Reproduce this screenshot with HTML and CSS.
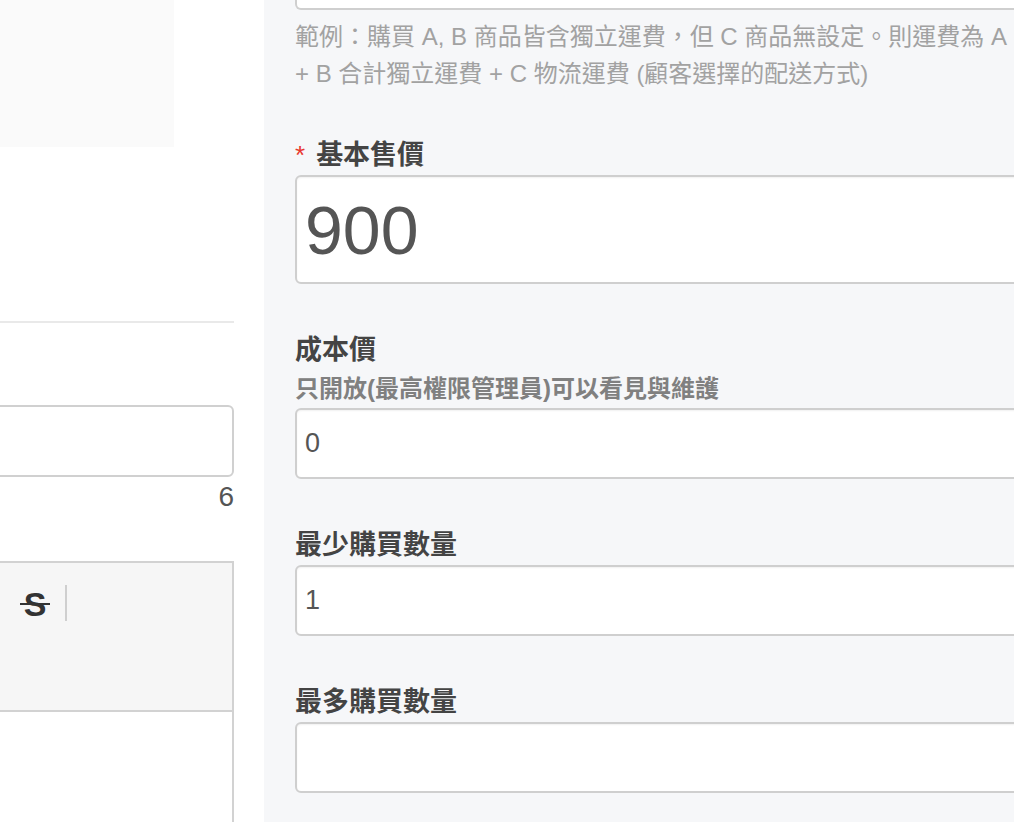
FILE: index.html
```html
<!DOCTYPE html>
<html lang="zh-Hant">
<head>
<meta charset="utf-8">
<title>商品設定</title>
<link rel="stylesheet" href="styles.css">
</head>
<body>
<div class="page">
  <div class="left">
    <div class="left-inner">
      <div class="gray-box"></div>
      <div class="divider"></div>
      <div class="field-box"></div>
      <div class="counter">6</div>
      <div class="editor">
        <div class="toolbar">
          <span class="tool-strike">S</span>
          <span class="tool-sep"></span>
        </div>
        <div class="editor-body"></div>
      </div>
    </div>
  </div>
  <div class="right">
    <div class="stub"></div>
    <p class="help">範例：購買 A, B 商品皆含獨立運費，但 C 商品無設定。則運費為 A + B 合計獨立運費 + C 物流運費 (顧客選擇的配送方式)</p>

    <div class="group first">
      <div class="label"><span class="req">*</span>基本售價</div>
      <div class="input big">900</div>
    </div>

    <div class="group">
      <div class="label">成本價</div>
      <div class="sub">只開放(最高權限管理員)可以看見與維護</div>
      <div class="input">0</div>
    </div>

    <div class="group">
      <div class="label">最少購買數量</div>
      <div class="input">1</div>
    </div>

    <div class="group">
      <div class="label">最多購買數量</div>
      <div class="input"></div>
    </div>
  </div>
</div>
</body>
</html>
```

FILE: styles.css
```css
html, body {
  margin: 0;
  padding: 0;
  height: 100%;
  overflow: hidden;
}

body {
  font-family: "Liberation Sans", "Noto Sans CJK TC", sans-serif;
  background: #ffffff;
}

.page {
  display: flex;
  height: 822px;
}

/* ---------- left column ---------- */
.left {
  width: 264px;
  flex: none;
  box-sizing: border-box;
  padding-right: 30px;
  overflow: hidden;
  background: #ffffff;
}

.left-inner {
  margin-left: -20px;
}

.gray-box {
  width: 194px;
  height: 147px;
  background: #fafafa;
}

.divider {
  margin-top: 174px;
  height: 2px;
  background: #e9e9e9;
}

.field-box {
  margin-top: 82px;
  height: 72px;
  box-sizing: border-box;
  border: 2px solid #d0d0d0;
  border-radius: 6px;
  background: #fff;
}

.counter {
  height: 40px;
  line-height: 40px;
  text-align: right;
  font-size: 28px;
  color: #555;
}

.editor {
  margin-top: 44px;
}

.toolbar {
  height: 151px;
  box-sizing: border-box;
  background: #f6f6f6;
  border: 2px solid #d2d2d2;
  padding: 22px 0 0 40px;
  display: flex;
  align-items: flex-start;
  gap: 17px;
}

.tool-strike {
  position: relative;
  width: 26px;
  height: 36px;
  line-height: 38px;
  text-align: center;
  font-size: 34px;
  font-weight: bold;
  color: #333;
}

.tool-strike::after {
  content: "";
  position: absolute;
  left: -2px;
  right: -2px;
  top: 18px;
  height: 2px;
  background: #333;
}

.tool-sep {
  width: 2px;
  height: 36px;
  background: #cfcfcf;
}

.editor-body {
  height: 200px;
  border: 2px solid #d2d2d2;
  border-top: none;
  background: #fff;
}

/* ---------- right panel ---------- */
.right {
  flex: 1;
  background: #f6f7f9;
  padding-left: 31px;
  overflow: hidden;
}

.stub,
.help,
.group {
  margin-right: -30px;
}

.stub {
  height: 10px;
  box-sizing: border-box;
  border: 2px solid #cfcfcf;
  border-top: none;
  border-radius: 0 0 6px 6px;
  background: #fff;
}

.help {
  margin: 8px 0 0 0;
  max-width: 720px;
  font-size: 24px;
  line-height: 37px;
  color: #a2a2a2;
}

.group {
  margin-top: 46px;
}

.group.first {
  margin-top: 43px;
}

.label {
  height: 40px;
  line-height: 40px;
  font-size: 27px;
  font-weight: bold;
  color: #444;
}

.req {
  color: #e8382f;
  font-weight: normal;
  font-size: 26px;
  margin-right: 11px;
}

.sub {
  height: 38px;
  line-height: 38px;
  font-size: 24px;
  font-weight: bold;
  color: #808080;
}

.input {
  height: 71px;
  box-sizing: border-box;
  border: 2px solid #cfcfcf;
  border-radius: 6px;
  box-shadow: inset 0 1px 2px rgba(0, 0, 0, 0.06);
  background: #fff;
  padding-left: 8px;
  display: flex;
  align-items: center;
  font-size: 27px;
  color: #555;
}

.input.big {
  height: 109px;
  font-size: 68px;
  padding-left: 8px;
}
```
